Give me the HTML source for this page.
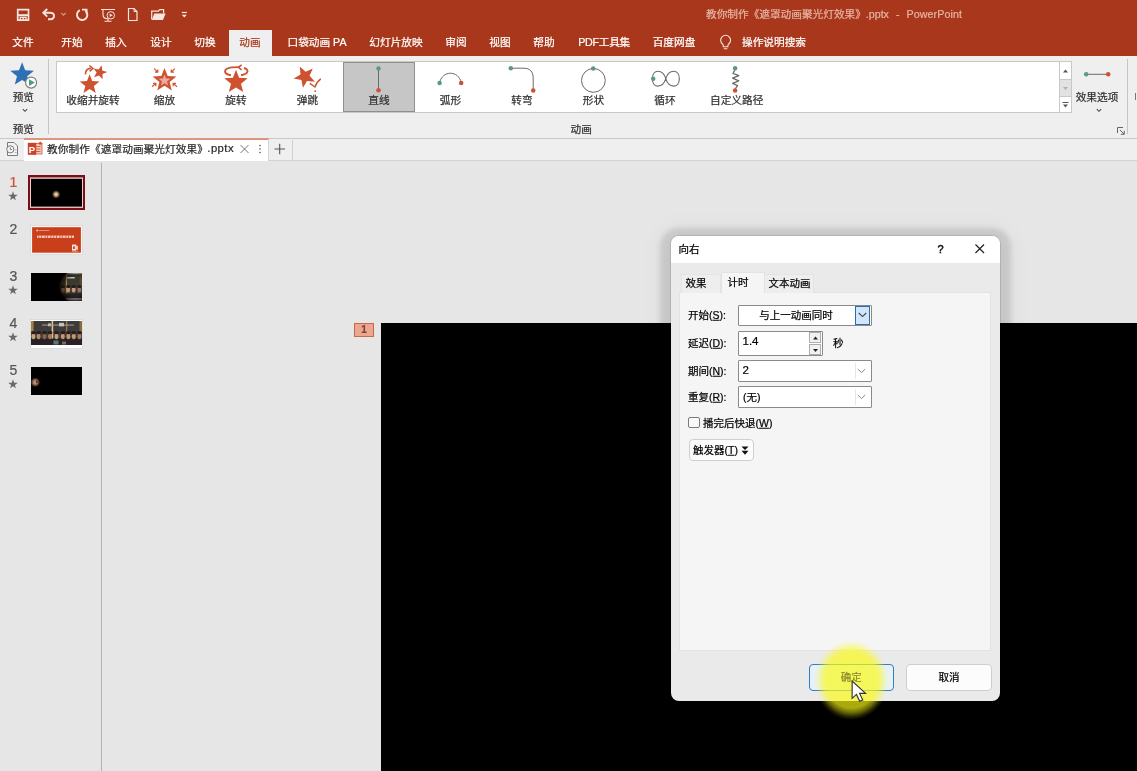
<!DOCTYPE html>
<html lang="zh-CN">
<head>
<meta charset="utf-8">
<title>PowerPoint</title>
<style>
*{box-sizing:border-box;margin:0;padding:0}
html,body{width:1137px;height:771px;overflow:hidden;background:#e6e6e6}
body{position:relative;font-family:"Liberation Sans","Noto Sans CJK SC",sans-serif;font-size:10.67px;color:#3b3b3b;line-height:1}
.abs{position:absolute}
.t,.tl,.num{filter:blur(.3px);-webkit-text-stroke:0.22px currentColor}
.t{position:absolute;white-space:nowrap;transform:translate(-50%,-50%);line-height:1}
.tl{position:absolute;white-space:nowrap;transform:translate(0,-50%);line-height:1}
svg{position:absolute;overflow:visible}
/* header */
#hdr{left:0;top:0;width:1137px;height:56px;background:#a8371c}
#hdr .t,#hdr .tl{color:#fff;font-size:10.67px}
#title,#title2,#title3{color:#e6b3a3 !important}
#acttab{left:229px;top:30px;width:43px;height:27px;background:#efefef}
#acttab .t{color:#a8371c}
/* ribbon */
#rib{left:0;top:56px;width:1137px;height:83px;background:#efefef;border-bottom:1px solid #c9c9c9}
#gal{left:56px;top:5px;width:1016px;height:52px;background:#fff;border:1px solid #c8c8c8}
#sel{left:343px;top:62px;width:72px;height:50px;background:#c6c6c6;border:1px solid #8f8f8f}
.lbl{font-size:10.67px;color:#303030}
/* doc tabs */
#tabs{left:0;top:139px;width:1137px;height:22px;background:#efefef;border-bottom:1px solid #d2d2d2}
#dtab{left:24px;top:-1px;width:245px;height:23px;background:#fff;border-top:2px solid #dc957f;border-right:1px solid #d4d4d4}
/* workspace */
#vline{left:101px;top:163px;width:1px;height:608px;background:#b2b2b2}
#slide{left:381px;top:323px;width:756px;height:448px;background:#000}
#tag{left:354px;top:323px;width:20px;height:14px;background:#eda690;border:1px solid #c9684c;color:#6e3a2b;font-size:10px;text-align:center;line-height:12px}
.num{position:absolute;margin-top:-0.5px;font-size:14px;color:#555;left:9px;width:9px;text-align:center;line-height:1}
.star{position:absolute;left:8px;font-size:9px;color:#666;line-height:1}
.th{position:absolute;left:30px;width:53px;height:30px;background:#000;border:1px solid #f4f4f4}

/* dialog */
#dlg{left:671px;top:236px;width:329px;height:464.600px;background:#eaeaea;border-radius:8px;box-shadow:0 0 0 1px rgba(0,0,0,.10),0 3px 5px 11px rgba(0,0,0,.105),0 3px 24px 12px rgba(0,0,0,.04);overflow:hidden;font-size:10.5px;color:#000}
#dlg .tb{left:0;top:0;width:329px;height:27px;background:#fff}
#dlg .panel{left:8px;top:56px;width:312px;height:359px;background:#f5f5f5;border:1px solid #e3e3e3}
#dlg .tab{position:absolute;top:38px;height:19px;background:#eeeeee;border:1px solid #e4e4e4;border-bottom:none}
#dlg .tab.on{top:36px;height:21px;background:#f5f5f5;border-color:#e3e3e3}
#dlg .box{position:absolute;background:#fff;border:1px solid #8a8a8a;border-radius:1px}
#dlg .btn{position:absolute;background:#fcfcfc;border:1px solid #cfcfcf;border-radius:4px}
u{text-decoration:underline;text-underline-offset:1px}
</style>
</head>
<body>
<!-- HEADER -->
<div id="hdr" class="abs">
  <div id="acttab" class="abs"><span class="t" style="left:21px;top:11.600px">动画</span></div>
  <span class="t" style="left:23px;top:42px">文件</span>
  <span class="t" style="left:72px;top:42px">开始</span>
  <span class="t" style="left:116px;top:42px">插入</span>
  <span class="t" style="left:161px;top:42px">设计</span>
  <span class="t" style="left:205px;top:42px">切换</span>
  <span class="t" style="left:317px;top:42px">口袋动画 PA</span>
  <span class="t" style="left:396px;top:42px">幻灯片放映</span>
  <span class="t" style="left:456px;top:42px">审阅</span>
  <span class="t" style="left:500px;top:42px">视图</span>
  <span class="t" style="left:544px;top:42px">帮助</span>
  <span class="t" style="left:604.100px;top:42px;letter-spacing:-0.25px">PDF工具集</span>
  <span class="t" style="left:674px;top:42px">百度网盘</span>
  <span class="t" style="left:774px;top:42px">操作说明搜索</span>
  <span class="tl" id="title" style="left:706px;top:14px">教你制作《遮罩动画聚光灯效果》.pptx</span><span class="tl" id="title2" style="left:896px;top:14px">-</span><span class="tl" id="title3" style="left:906.5px;top:14px;letter-spacing:0.1px">PowerPoint</span>
</div>
<svg id="qat" style="left:0;top:0" width="820" height="56" viewBox="0 0 820 56">
<path d="M17.700 9.700H28.500V20.200H17.700Z" stroke="#f7e6e0" stroke-width="1.7" fill="none"/><path d="M18 15.200H28.200" stroke="#f7e6e0" stroke-width="2"/><path d="M20.300 20.500V17.300H26V20.500M23.200 17.500V20.500" stroke="#f7e6e0" stroke-width="1.300" fill="none"/>
<path d="M43.800 12.800H50C55.300 12.800 55.300 19.300 50.300 19.300H48" stroke="#f7e6e0" stroke-width="1.9" fill="none"/><path d="M47.200 9L43.300 12.800L47.200 16.600" stroke="#f7e6e0" stroke-width="1.9" fill="none"/>
<path d="M61.300 13L63.500 15.200L65.700 13" stroke="#e0947c" stroke-width="1.1" fill="none"/>
<path d="M79.800 10.200A5.200 5.200 0 1 0 85.200 10.600" stroke="#f7e6e0" stroke-width="1.9" fill="none"/><path d="M82 9.600H86.600V14.200" stroke="#f7e6e0" stroke-width="1.8" fill="none"/>
<path d="M101 9.500H115M103 9.800V14.500C103 17.500 104.500 18.800 108 18.800M108 18.800V21M104.500 21.200H111.500" stroke="#f7e6e0" stroke-width="1.1" fill="none"/><circle cx="110.800" cy="15.300" r="3.700" stroke="#f7e6e0" stroke-width="1" fill="#a8371c"/><path d="M109.600 13.500L112.800 15.300L109.600 17.100Z" fill="#f7e6e0"/>
<path d="M128.500 8.500H134L137 11.500V20.500H128.500Z" stroke="#f7e6e0" stroke-width="1.2" fill="none"/><path d="M134 8.500V11.500H137" stroke="#f7e6e0" stroke-width="1" fill="none"/>
<path d="M151.700 19.500V11.200H158.300L159.800 9.600H163.600V13.300" stroke="#f7e6e0" stroke-width="1.200" fill="none"/><path d="M151.800 20L154.300 13.500H165.600L163 20Z" fill="#f7e6e0"/>
<path d="M181.800 12.500H186.800" stroke="#f7e6e0" stroke-width="1.2"/><path d="M181.800 14.800H186.800L184.300 17.600Z" fill="#f7e6e0"/>
<path d="M723.300 45.200C721.500 43.500 720.600 42 720.600 40.300A5 5 0 0 1 730.600 40.300C730.600 42 729.700 43.500 727.900 45.200V46.700H723.300ZM723.800 48.800H727.400" stroke="#f7e6e0" stroke-width="1.1" fill="none"/>
</svg>
<!-- RIBBON -->
<div id="rib" class="abs">
  <div id="gal" class="abs"></div>
</div>
<div id="sel" class="abs"></div>
<div id="riblayer" class="abs" style="left:0;top:0;width:1137px;height:140px">
<svg id="ribsvg" style="left:0;top:0" width="1137" height="140" viewBox="0 0 1137 140">
<path d="M22.1 62.2L25.2 70.3L33.9 70.8L27.2 76.2L29.4 84.6L22.1 79.9L14.8 84.6L17.0 76.2L10.3 70.8L19.0 70.3Z" fill="#2f6fb3"/>
<circle cx="31.100" cy="82.600" r="5.500" fill="#fff" stroke="#7c7c7c" stroke-width="1.150"/>
<path d="M29 79.200L34.800 82.600L29 86Z" fill="#4c9f7a"/>
<path d="M22.800 109.200L25 111.300L27.200 109.200" stroke="#4a4a4a" stroke-width="1.100" fill="none"/>
<path d="M48.5 59V134" stroke="#c4c4c4" stroke-width="1"/>
<path d="M89.6 74.2L92.2 81.0L99.5 81.4L93.9 86.0L95.7 93.0L89.6 89.1L83.5 93.0L85.3 86.0L79.7 81.4L87.0 81.0Z" fill="#cf5230"/>
<path d="M101.6 65.2L102.2 70.4L107.2 71.9L102.5 74.1L102.6 79.3L99.0 75.5L94.1 77.2L96.6 72.6L93.5 68.5L98.6 69.4Z" fill="#cf5230"/>
<path d="M85.4 74.4C85.2 70.4 87.6 68.2 91.3 68.4" stroke="#cf5230" stroke-width="1.7" fill="none"/>
<path d="M89.4 65.6L93 68.5L89.6 71.4" stroke="#cf5230" stroke-width="1.4" fill="none"/>
<path d="M164.5 67.9L167.7 76.1L176.4 76.5L169.6 82.1L171.8 90.5L164.5 85.8L157.2 90.5L159.4 82.1L152.6 76.5L161.3 76.1Z" fill="#cf5230"/>
<path d="M164.5 74.4L166.1 78.4L170.4 78.7L167.0 81.4L168.1 85.6L164.5 83.3L160.9 85.6L162.0 81.4L158.6 78.7L162.9 78.4Z" fill="#e9ab9b"/>
<path d="M154.2 68.6L157.8 72.2M155.0 72.2L157.8 72.2L157.8 69.4" stroke="#cf5230" stroke-width="1.2" fill="none"/>
<path d="M174.8 68.6L171.2 72.2M174.0 72.2L171.2 72.2L171.2 69.4" stroke="#cf5230" stroke-width="1.2" fill="none"/>
<path d="M152.0 86.8L155.8 83.4M153.0 83.4L155.8 83.4L155.8 86.2" stroke="#cf5230" stroke-width="1.2" fill="none"/>
<path d="M177.0 86.8L173.2 83.4M176.0 83.4L173.2 83.4L173.2 86.2" stroke="#cf5230" stroke-width="1.2" fill="none"/>
<path d="M236.0 69.8L239.1 77.8L247.7 78.3L241.0 83.7L243.2 92.1L236.0 87.4L228.8 92.1L231.0 83.7L224.3 78.3L232.9 77.8Z" fill="#cf5230"/>
<path d="M244 68C249.500 69.6 248.600 74 241 75.200M231 75.200C222.800 73.800 223.200 68.600 231.500 67.400L239.500 67.100" stroke="#cf5230" stroke-width="1.9" fill="none"/>
<path d="M241.6 64.800L238.4 67.300L241.6 70" stroke="#cf5230" stroke-width="1.6" fill="none"/>
<path d="M299.7 66.5L305.6 71.8L312.8 68.6L309.6 75.8L314.9 81.7L307.0 80.9L303.0 87.8L301.4 80.0L293.6 78.4L300.5 74.4Z" fill="#cf5230"/>
<path d="M309.8 83.3L315 87C316 83.500 318 80.800 320.8 78.800" stroke="#cf5230" stroke-width="1.5" fill="none" stroke-linejoin="round"/>
<circle cx="315.2" cy="91.2" r="0.9" fill="#cf5230"/>
<path d="M378.5 68.5V90" stroke="#6a6a6a" stroke-width="1"/>
<circle cx="378.5" cy="68.4" r="2.25" fill="#5b9a82"/><circle cx="378.5" cy="90.3" r="2.25" fill="#cf5230"/>
<path d="M439.6 83C442 70 459 70 461.2 83" stroke="#6a6a6a" stroke-width="1" fill="none"/>
<circle cx="439.6" cy="83.1" r="2.25" fill="#5b9a82"/><circle cx="461.2" cy="83.1" r="2.25" fill="#cf5230"/>
<path d="M510.8 68.2H524C530 68.2 533.2 72 533.2 78V90" stroke="#6a6a6a" stroke-width="1" fill="none"/>
<circle cx="510.8" cy="68.2" r="2.25" fill="#5b9a82"/><circle cx="533.2" cy="90.4" r="2.25" fill="#cf5230"/>
<circle cx="593.4" cy="80.4" r="11.9" stroke="#6a6a6a" stroke-width="1" fill="none"/>
<circle cx="593.2" cy="68.4" r="2.25" fill="#5b9a82"/>
<path d="M665.800 78.700C662.800 68.800 652.400 68.800 652.400 78.700C652.400 88.600 662.800 88.600 665.800 78.700C668.800 68.800 679.300 68.800 679.300 78.700C679.300 88.600 668.800 88.600 665.800 78.700Z" stroke="#6a6a6a" stroke-width="1.150" fill="none"/>
<circle cx="653.2" cy="78.7" r="2.25" fill="#5b9a82"/>
<path d="M735.100 69.500L733 73.400L738.800 75.600L732.600 78.200L738.800 80.800L732.600 83.400L737.600 85.600L735.100 89" stroke="#6a6a6a" stroke-width="1.250" fill="none" stroke-linejoin="round"/>
<circle cx="735.1" cy="68.2" r="2.25" fill="#5b9a82"/><circle cx="735.1" cy="90.4" r="2.25" fill="#cf5230"/>
<rect x="1059.500" y="61.5" width="12" height="51" fill="#fff" stroke="#c8c8c8"/>
<rect x="1060" y="79.5" width="11" height="17" fill="#e2e2e2"/>
<path d="M1059.500 79.5H1071.500M1059.500 96.5H1071.500" stroke="#c8c8c8"/>
<path d="M1063 72.500L1065.500 69.500L1068 72.500Z" fill="#555"/>
<path d="M1063 87L1065.500 90L1068 87Z" fill="#b0b0b0"/>
<path d="M1062.500 102.500H1068.500" stroke="#555" stroke-width="1"/><path d="M1063 104.500L1065.500 107.500L1068 104.500Z" fill="#555"/>
<path d="M1086 74.3H1108" stroke="#6a6a6a" stroke-width="1"/>
<circle cx="1086.200" cy="74.3" r="2.25" fill="#5b9a82"/><circle cx="1108.200" cy="74.3" r="2.25" fill="#cf5230"/>
<path d="M1096.800 109.200L1099 111.300L1101.200 109.200" stroke="#4a4a4a" stroke-width="1.100" fill="none"/>
<path d="M1117.500 133V127.500H1123" stroke="#666" stroke-width="1" fill="none"/><path d="M1120 130L1124 134M1124.300 130.800V134.300H1120.800" stroke="#666" stroke-width="1" fill="none"/>
<path d="M1127.500 59V134" stroke="#c4c4c4" stroke-width="1"/>
<path d="M1135.500 93V100" stroke="#777" stroke-width="1"/>
</svg>
<span class="t lbl" style="left:93px;top:100px">收缩并旋转</span>
<span class="t lbl" style="left:164.4px;top:100px">缩放</span>
<span class="t lbl" style="left:236px;top:100px">旋转</span>
<span class="t lbl" style="left:307.5px;top:100px">弹跳</span>
<span class="t lbl" style="left:379px;top:100px">直线</span>
<span class="t lbl" style="left:450.5px;top:100px">弧形</span>
<span class="t lbl" style="left:522px;top:100px">转弯</span>
<span class="t lbl" style="left:593.4px;top:100px">形状</span>
<span class="t lbl" style="left:665px;top:100px">循环</span>
<span class="t lbl" style="left:736.7px;top:100px">自定义路径</span>
<span class="t lbl" style="left:23.3px;top:97px">预览</span>
<span class="t lbl" style="left:23.3px;top:128.5px">预览</span>
<span class="t lbl" style="left:581.2px;top:128.5px">动画</span>
<span class="t lbl" style="left:1097px;top:97px">效果选项</span>
</div>
<!-- DOC TABS -->
<div id="tabs" class="abs">
  <div id="dtab" class="abs"></div>
</div>
<svg id="dts" style="left:0;top:139px" width="300" height="22" viewBox="0 139 300 22">
<path d="M7.500 142.500H14L17.500 146V155.500H7.500Z" stroke="#7a7a7a" stroke-width="1" fill="#f4f4f4"/><circle cx="10.300" cy="149.300" r="3.600" stroke="#7a7a7a" stroke-width="1" fill="#f4f4f4"/><path d="M10.300 147.300V149.500H12" stroke="#7a7a7a" stroke-width="0.9" fill="none"/><path d="M14.800 150H16.500M14.800 152.500H16.500" stroke="#9a9a9a" stroke-width="0.8"/>
<rect x="33" y="143.500" width="9" height="10.500" fill="#f1c9bc" stroke="#d35a38" stroke-width="0.8"/><path d="M36 146.500H40.500M36 149H40.500M36 151.500H40.500" stroke="#d35a38" stroke-width="0.9"/><rect x="27.800" y="142.800" width="8.400" height="12" fill="#c9442a"/><circle cx="40.300" cy="143.300" r="1.500" fill="#e34a1f"/>
<text x="32" y="152.600" text-anchor="middle" font-family="Liberation Sans, sans-serif" font-weight="bold" font-size="9.500" fill="#fff">P</text>
<path d="M240.500 145L248.500 153M248.500 145L240.500 153" stroke="#666" stroke-width="0.9" fill="none"/>
<circle cx="260" cy="145.500" r="0.800" fill="#555"/><circle cx="260" cy="149" r="0.800" fill="#555"/><circle cx="260" cy="152.500" r="0.800" fill="#555"/>
<path d="M274.500 149H285M279.700 143.800V154.200" stroke="#555" stroke-width="1.100" fill="none"/>
<path d="M292.500 140V160" stroke="#d0d0d0" stroke-width="1"/>
</svg>
<span class="tl" style="left:47px;top:149px;font-size:10.67px;color:#2a2a2a;letter-spacing:0.08px">教你制作《遮罩动画聚光灯效果》</span><span class="tl" style="left:207.300px;top:149px;font-size:11.300px;color:#2a2a2a;letter-spacing:0.45px">.pptx</span>
<!-- WORKSPACE -->
<div id="left" class="abs" style="left:0;top:161px;width:101px;height:610px">
<span class="num" style="top:14px;color:#c8553a">1</span>
<svg style="left:7.5px;top:30px" width="10" height="10" viewBox="0 0 10 10"><path d="M5.0 0.3L6.2 3.7L9.8 3.8L6.9 5.9L7.9 9.3L5.0 7.3L2.1 9.3L3.1 5.9L0.2 3.8L3.8 3.7Z" fill="#6a6a6a"/></svg>
<span class="num" style="top:61px;color:#555">2</span>
<span class="num" style="top:108px;color:#555">3</span>
<svg style="left:7.5px;top:124px" width="10" height="10" viewBox="0 0 10 10"><path d="M5.0 0.3L6.2 3.7L9.8 3.8L6.9 5.9L7.9 9.3L5.0 7.3L2.1 9.3L3.1 5.9L0.2 3.8L3.8 3.7Z" fill="#6a6a6a"/></svg>
<span class="num" style="top:155px;color:#555">4</span>
<svg style="left:7.5px;top:171px" width="10" height="10" viewBox="0 0 10 10"><path d="M5.0 0.3L6.2 3.7L9.8 3.8L6.9 5.9L7.9 9.3L5.0 7.3L2.1 9.3L3.1 5.9L0.2 3.8L3.8 3.7Z" fill="#6a6a6a"/></svg>
<span class="num" style="top:202px;color:#555">5</span>
<svg style="left:7.5px;top:218px" width="10" height="10" viewBox="0 0 10 10"><path d="M5.0 0.3L6.2 3.7L9.8 3.8L6.9 5.9L7.9 9.3L5.0 7.3L2.1 9.3L3.1 5.9L0.2 3.8L3.8 3.7Z" fill="#6a6a6a"/></svg>
</div>
<svg id="thumbs" style="left:0;top:165px" width="101" height="240" viewBox="0 165 101 240">
<defs><filter id="bl" x="-10%" y="-10%" width="120%" height="120%"><feGaussianBlur stdDeviation="0.65"/></filter>
<filter id="bl2" x="-30%" y="-30%" width="160%" height="160%"><feGaussianBlur stdDeviation="0.4"/></filter>
<clipPath id="c3"><rect x="31" y="273" width="51" height="28"/></clipPath>
<clipPath id="c3c"><circle cx="75.6" cy="286.6" r="16.6"/></clipPath>
<clipPath id="c4"><rect x="31" y="321" width="51" height="24"/></clipPath>
<clipPath id="c5"><rect x="31" y="367" width="51" height="28"/></clipPath>
<radialGradient id="g1"><stop offset="0" stop-color="#f3d9cc"/><stop offset="0.38" stop-color="#d2a88c"/><stop offset="0.62" stop-color="#6e5636"/><stop offset="1" stop-color="#000"/></radialGradient>
<radialGradient id="g5"><stop offset="0" stop-color="#c9a992"/><stop offset="0.45" stop-color="#9a7560"/><stop offset="0.75" stop-color="#4a3420"/><stop offset="1" stop-color="#000"/></radialGradient>
<radialGradient id="g3" cx="75.6" cy="286.6" r="17.500" gradientUnits="userSpaceOnUse"><stop offset="0" stop-color="#000" stop-opacity="0"/><stop offset="0.55" stop-color="#000" stop-opacity="0.05"/><stop offset="0.85" stop-color="#000" stop-opacity="0.6"/><stop offset="0.97" stop-color="#000" stop-opacity="1"/></radialGradient>
</defs>
<rect x="28" y="175" width="57" height="35" fill="#7a0e16"/>
<rect x="30" y="177.400" width="53" height="30.500" fill="#eecfc9"/>
<rect x="31" y="178.800" width="51" height="27.800" fill="#000"/>
<circle cx="56.100" cy="194.400" r="4.300" fill="url(#g1)"/>
<rect x="30.500" y="225.500" width="52" height="29" fill="#fbf6f3" stroke="#d4d0cf" stroke-width="0.6"/>
<rect x="32.100" y="227.200" width="48.800" height="25.500" fill="#c93f1c"/>
<g filter="url(#bl2)"><circle cx="37.200" cy="230.400" r="1" fill="#f3c6b8"/><rect x="38.800" y="230" width="10.500" height="0.900" fill="#e59a84"/>
<rect x="37" y="235.600" width="37" height="2.300" fill="#f4cdbf"/>
<rect x="38.3" y="235.4" width="0.9" height="2.700" fill="#c93f1c" opacity="0.75"/>
<rect x="41.1" y="235.4" width="0.9" height="2.700" fill="#c93f1c" opacity="0.75"/>
<rect x="44.7" y="235.4" width="0.9" height="2.700" fill="#c93f1c" opacity="0.75"/>
<rect x="47.0" y="235.4" width="0.9" height="2.700" fill="#c93f1c" opacity="0.75"/>
<rect x="50.5" y="235.4" width="0.9" height="2.700" fill="#c93f1c" opacity="0.75"/>
<rect x="53.3" y="235.4" width="0.9" height="2.700" fill="#c93f1c" opacity="0.75"/>
<rect x="56.0" y="235.4" width="0.9" height="2.700" fill="#c93f1c" opacity="0.75"/>
<rect x="59.5" y="235.4" width="0.9" height="2.700" fill="#c93f1c" opacity="0.75"/>
<rect x="61.9" y="235.4" width="0.9" height="2.700" fill="#c93f1c" opacity="0.75"/>
<rect x="65.4" y="235.4" width="0.9" height="2.700" fill="#c93f1c" opacity="0.75"/>
<rect x="68.0" y="235.4" width="0.9" height="2.700" fill="#c93f1c" opacity="0.75"/>
<rect x="71.0" y="235.4" width="0.9" height="2.700" fill="#c93f1c" opacity="0.75"/>
<rect x="72" y="244.600" width="4.300" height="6" fill="#f8ebe6"/><rect x="75.300" y="245.800" width="2.700" height="4" fill="#f0c9bd"/><rect x="73" y="246.300" width="1.800" height="2.700" fill="#c93f1c"/><rect x="71.800" y="251.200" width="6.500" height="0.700" fill="#e59a84"/></g>
<rect x="31" y="273" width="51" height="28" fill="#000"/>
<g clip-path="url(#c3)"><g clip-path="url(#c3c)"><g filter="url(#bl)">
<rect x="56" y="270" width="30" height="34" fill="#3b3a33"/>
<rect x="58" y="273" width="8" height="17" fill="#3f3524"/>
<rect x="65.800" y="273" width="1.300" height="22" fill="#a98952"/>
<rect x="79.500" y="273" width="3" height="15" fill="#5b4d30"/>
<rect x="67" y="273" width="15" height="1.200" fill="#f2efe9"/>
<rect x="66.800" y="277" width="8" height="1.500" fill="#c9c4b8"/>
<ellipse cx="62.8" cy="289.800" rx="1.900" ry="2.800" fill="#8a6a56"/>
<ellipse cx="62.8" cy="286.400" rx="2.300" ry="1.500" fill="#2a1c14"/>
<ellipse cx="68.3" cy="289.800" rx="1.900" ry="2.800" fill="#d09a7a"/>
<ellipse cx="68.3" cy="286.400" rx="2.300" ry="1.500" fill="#2a1c14"/>
<ellipse cx="73.7" cy="289.800" rx="1.900" ry="2.800" fill="#cf9c80"/>
<ellipse cx="73.7" cy="286.400" rx="2.300" ry="1.500" fill="#2a1c14"/>
<ellipse cx="79.4" cy="289.800" rx="1.900" ry="2.800" fill="#9a7660"/>
<ellipse cx="79.4" cy="286.400" rx="2.300" ry="1.500" fill="#2a1c14"/>
<rect x="56" y="293.500" width="30" height="5" fill="#2b2326"/>
<rect x="66" y="298" width="16" height="2.600" fill="#9a9291"/>
</g></g><rect x="31" y="273" width="51" height="28" fill="url(#g3)"/></g>
<rect x="30.500" y="319.500" width="52" height="29" fill="#fff" stroke="#cfcfcf" stroke-width="0.6"/>
<g clip-path="url(#c4)"><g filter="url(#bl)">
<rect x="30" y="320" width="54" height="26" fill="#3c3b3a"/>
<rect x="31" y="320" width="2.600" height="14" fill="#a8823f"/>
<rect x="51.600" y="320" width="1.600" height="24" fill="#e2c27c"/>
<rect x="66" y="320" width="1.300" height="14" fill="#9a7a44"/>
<rect x="79.500" y="320" width="2.500" height="14" fill="#8a6c3a"/>
<rect x="42" y="324.300" width="32" height="1.600" fill="#a9a69e" opacity="0.6"/>
<rect x="48" y="323.300" width="3" height="3" fill="#cfcbc2" opacity="0.8"/><rect x="59" y="322.800" width="5" height="3.600" fill="#d8d4cb" opacity="0.85"/>
<rect x="30" y="338.500" width="54" height="7" fill="#2a2422"/>
<ellipse cx="33.4" cy="336.300" rx="1.900" ry="2.900" fill="#c8a384"/>
<ellipse cx="33.4" cy="332.600" rx="2.500" ry="1.600" fill="#2b1d16"/>
<ellipse cx="38.6" cy="336.300" rx="1.900" ry="2.900" fill="#b78a6e"/>
<ellipse cx="38.6" cy="332.600" rx="2.500" ry="1.600" fill="#2b1d16"/>
<ellipse cx="44.5" cy="336.300" rx="1.900" ry="2.900" fill="#8a6250"/>
<ellipse cx="44.5" cy="332.600" rx="2.500" ry="1.600" fill="#2b1d16"/>
<ellipse cx="50.0" cy="336.300" rx="1.900" ry="2.900" fill="#a87a64"/>
<ellipse cx="50.0" cy="332.600" rx="2.500" ry="1.600" fill="#2b1d16"/>
<ellipse cx="56.5" cy="336.300" rx="1.900" ry="2.900" fill="#c2a08a"/>
<ellipse cx="56.5" cy="332.600" rx="2.500" ry="1.600" fill="#2b1d16"/>
<ellipse cx="62.8" cy="336.300" rx="1.900" ry="2.900" fill="#c59374"/>
<ellipse cx="62.8" cy="332.600" rx="2.500" ry="1.600" fill="#2b1d16"/>
<ellipse cx="68.4" cy="336.300" rx="1.900" ry="2.900" fill="#cc926e"/>
<ellipse cx="68.4" cy="332.600" rx="2.500" ry="1.600" fill="#2b1d16"/>
<ellipse cx="73.8" cy="336.300" rx="1.900" ry="2.900" fill="#c99577"/>
<ellipse cx="73.8" cy="332.600" rx="2.500" ry="1.600" fill="#2b1d16"/>
<ellipse cx="79.5" cy="336.300" rx="1.900" ry="2.900" fill="#a57e66"/>
<ellipse cx="79.5" cy="332.600" rx="2.500" ry="1.600" fill="#2b1d16"/>
<rect x="53.500" y="340.500" width="5" height="4" fill="#5d7a72"/><rect x="62" y="341.500" width="4" height="3" fill="#7a6a58"/>
</g></g>
<rect x="31" y="367" width="51" height="28" fill="#000"/>
<g clip-path="url(#c5)"><circle cx="35.300" cy="382.300" r="4.800" fill="url(#g5)"/><circle cx="36.800" cy="381.800" r="1.100" fill="#5a2414" filter="url(#bl)"/></g>
</svg>
<div id="vline" class="abs"></div>
<div id="slide" class="abs"></div>
<div id="tag" class="abs"><span class="t" style="left:9px;top:6.300px;font-size:10px;font-weight:bold;color:#7d4432">1</span></div>
<div id="dlg" class="abs">
  <div class="tb abs"></div>
  <span class="tl" style="left:7.5px;top:13px;color:#000">向右</span>
  <span class="t" style="left:269.5px;top:13px;font-size:11px;color:#111;-webkit-text-stroke:0.5px #111">?</span>
  <svg style="left:304px;top:8.200px" width="9.500" height="9.500" viewBox="0 0 10 10"><path d="M0.5 0.5L9.5 9.5M9.5 0.5L0.5 9.5" stroke="#1f1f1f" stroke-width="1.25" fill="none"/></svg>
  <div class="panel abs"></div>
  <div class="tab" style="left:10px;width:40px"></div>
  <div class="tab on" style="left:50px;width:44px"></div>
  <div class="tab" style="left:93px;width:50px"></div>
  <span class="t" style="left:25px;top:46.500px">效果</span>
  <span class="t" style="left:67px;top:46px">计时</span>
  <span class="t" style="left:118.500px;top:46.500px">文本动画</span>

  <span class="tl" style="left:17px;top:79px">开始(<u>S</u>):</span>
  <div class="box" style="left:67px;top:69px;width:134px;height:21px"></div>
  <div class="abs" style="left:184px;top:70px;width:15px;height:19px;background:#cfe6fb;border:1px solid #2e6da4"></div>
  <svg style="left:187px;top:76px" width="9" height="6" viewBox="0 0 9 6"><path d="M0.8 1L4.5 4.6L8.2 1" stroke="#444" stroke-width="1.1" fill="none"/></svg>
  <span class="t" style="left:125px;top:79px">与上一动画同时</span>

  <span class="tl" style="left:17px;top:106.500px">延迟(<u>D</u>):</span>
  <div class="box" style="left:67px;top:95px;width:85px;height:25px"></div>
  <span class="tl" style="left:71.5px;top:106px;font-size:11.5px">1.4</span>
  <div class="abs" style="left:138px;top:96px;width:12px;height:11px;background:#f1f1f1;border:1px solid #adadad"></div>
  <div class="abs" style="left:138px;top:108px;width:12px;height:11px;background:#f1f1f1;border:1px solid #adadad"></div>
  <svg style="left:141.500px;top:100px" width="5" height="3.500" viewBox="0 0 6 4"><path d="M0 4L3 0.5L6 4Z" fill="#222"/></svg>
  <svg style="left:141.500px;top:112.500px" width="5" height="3.500" viewBox="0 0 6 4"><path d="M0 0L3 3.5L6 0Z" fill="#222"/></svg>
  <span class="tl" style="left:162px;top:106.500px">秒</span>

  <span class="tl" style="left:17px;top:134.600px">期间(<u>N</u>):</span>
  <div class="box" style="left:67px;top:124px;width:134px;height:22px"></div>
  <span class="tl" style="left:71.5px;top:135px;font-size:11.5px">2</span>
  <div class="abs" style="left:184px;top:127px;width:1px;height:16px;background:#e6e6e6"></div><svg style="left:186px;top:132px" width="9" height="6" viewBox="0 0 9 6"><path d="M0.8 1L4.5 4.6L8.2 1" stroke="#8a8a8a" stroke-width="1" fill="none"/></svg>

  <span class="tl" style="left:17px;top:160.500px">重复(<u>R</u>):</span>
  <div class="box" style="left:67px;top:150px;width:134px;height:22px"></div>
  <span class="tl" style="left:72px;top:160.500px">(无)</span>
  <div class="abs" style="left:184px;top:153px;width:1px;height:16px;background:#e6e6e6"></div><svg style="left:186px;top:158px" width="9" height="6" viewBox="0 0 9 6"><path d="M0.8 1L4.5 4.6L8.2 1" stroke="#8a8a8a" stroke-width="1" fill="none"/></svg>

  <div class="abs" style="left:17px;top:181px;width:12px;height:11px;background:#fafafa;border:1px solid #7a7a7a;border-radius:2px"></div>
  <span class="tl" style="left:32px;top:186.500px">播完后快退(<u>W</u>)</span>

  <div class="btn" style="left:18px;top:203px;width:65px;height:22px"></div>
  <span class="tl" style="left:22px;top:214px">触发器(<u>T</u>)</span>
  <svg style="left:70px;top:210px" width="8" height="9" viewBox="0 0 8 9"><path d="M0.5 0.5H7.5L4 4Z M0.5 4.8H7.5L4 8.8Z" fill="#111"/></svg>

  <div class="btn" style="left:138px;top:428px;width:85px;height:27px;border-color:#2f7fc4;background:#e9f1f8"></div>
  <div class="btn" style="left:235px;top:428px;width:86px;height:27px"></div>
  <span class="t" style="left:278px;top:441px">取消</span>
</div>

<div id="halo" class="abs" style="left:813.500px;top:640px;width:75px;height:80px;border-radius:50%;background:radial-gradient(closest-side,rgba(250,250,20,.70) 0,rgba(250,250,20,.68) 70%,rgba(250,250,20,.42) 82%,rgba(250,250,20,.14) 92%,rgba(250,250,20,0) 100%)"></div>
<span class="t" style="left:851.300px;top:677.300px;font-size:10.5px;color:#8a8a2c">确定</span>
<svg style="left:850.600px;top:679.600px" width="16" height="23" viewBox="0 0 14 22" preserveAspectRatio="none"><path d="M1 1V17.500L4.800 13.800L7.600 20.300L10.300 19.100L7.500 12.800H12.800Z" fill="#fff" stroke="#333" stroke-width="1"/></svg>
</body>
</html>
